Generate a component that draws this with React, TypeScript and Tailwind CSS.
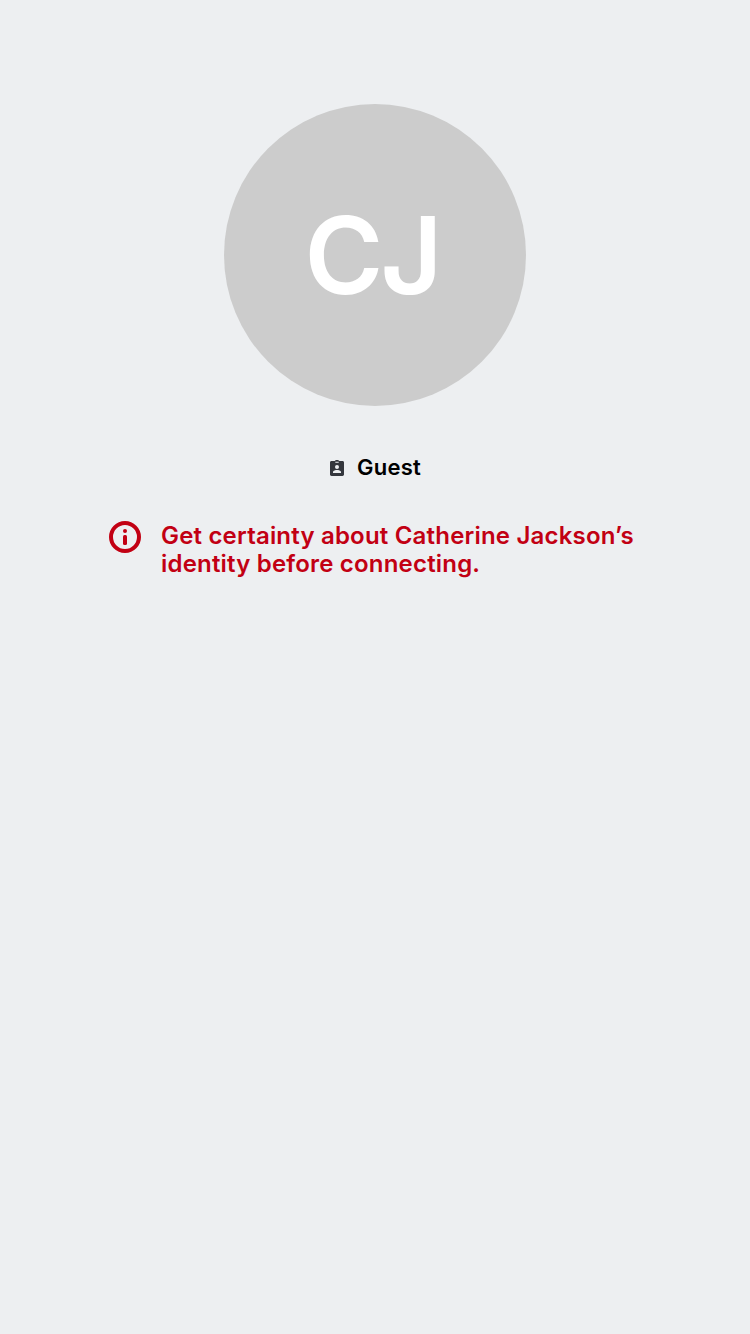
function GuestIcon() {
  return (
    <svg className="h-4 w-[14px] shrink-0" viewBox="0 0 14 16" aria-hidden="true">
      <path
        fill="#34373d"
        fillRule="evenodd"
        d="M1.500 1h3.300C5.200.3 6 0 7 0s1.800.3 2.200 1h3.300c.8 0 1.500.6 1.500 1.400v12.200c0 .8-.7 1.400-1.500 1.400h-11C.7 16 0 15.400 0 14.600V2.400C0 1.600.7 1 1.500 1ZM5.300 1.800v1h3.400v-1H5.300ZM7 4.900a2 2 0 1 0 0 4 2 2 0 0 0 0-4ZM3 13h8v-1c0-1.400-2.600-2-4-2s-4 .6-4 2v1Z"
      />
    </svg>
  );
}

function InfoIcon() {
  return (
    <svg className="-mt-px size-8 shrink-0" viewBox="0 0 32 32" fill="#c20013" aria-hidden="true">
      <circle cx="16" cy="16" r="14" fill="none" stroke="#c20013" strokeWidth="4" />
      <circle cx="16" cy="10" r="2" />
      <rect x="14" y="14" width="4" height="10" rx="1.5" />
    </svg>
  );
}

export default function App() {
  return (
    <main className="flex h-[1334px] w-[750px] flex-col items-center bg-[#edeff1] pt-[104px] font-['Inter',sans-serif]">
      <div className="flex size-[302px] items-center justify-center rounded-full bg-[#cccccc]">
        <span className="pt-px pr-[6px] text-[107px] leading-none font-semibold tracking-[-3px] text-white">CJ</span>
      </div>
      <div className="mt-[48px] flex h-7 items-center gap-[13px] pl-[1px]">
        <GuestIcon />
        <span className="-mt-0.5 text-[22px] leading-7 font-semibold tracking-[0.2px] text-black">Guest</span>
      </div>
      <div className="mt-10 ml-[109px] flex w-[532px] gap-5 self-start">
        <InfoIcon />
        <p className="text-[24px] leading-7 font-semibold tracking-[0.19px] whitespace-nowrap text-[#c20013]">
          Get certainty about Catherine Jackson’s
          <br />
          identity before connecting.
        </p>
      </div>
    </main>
  );
}
